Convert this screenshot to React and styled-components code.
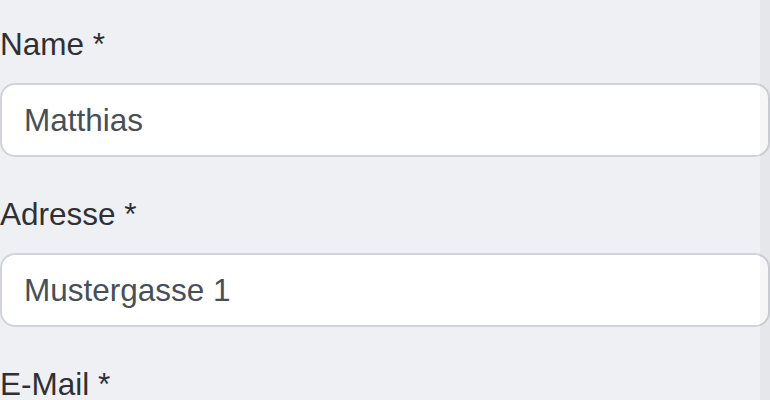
import React, { useState } from "react";
import styled, { createGlobalStyle } from "styled-components";

const GlobalStyle = createGlobalStyle`
  html, body {
    margin: 0;
    padding: 0;
    background: #eff0f4;
  }
  body {
    font-family: "Liberation Sans", Arial, Helvetica, sans-serif;
    overflow: hidden;
  }
`;

const Page = styled.div`
  position: relative;
  width: 770px;
  height: 400px;
  overflow: hidden;
`;

const Form = styled.form`
  display: flex;
  flex-direction: column;
  gap: 34px;
  padding-top: 21px;
`;

const Field = styled.div`
  display: flex;
  flex-direction: column;
`;

const Label = styled.label`
  font-size: 31.5px;
  line-height: 46px;
  color: #2f3033;
  margin-bottom: 16px;
`;

const Input = styled.input`
  box-sizing: border-box;
  width: 770px;
  height: 74px;
  margin: 0;
  padding: 0 22px;
  border: 2px solid #d0d4da;
  border-radius: 15px;
  background: #fff;
  font-family: "Liberation Sans", Arial, Helvetica, sans-serif;
  font-size: 31.5px;
  color: #484f57;
  outline: none;
`;

const ScrollTrack = styled.div`
  position: absolute;
  top: 0;
  right: 0;
  width: 10px;
  height: 100%;
  background: rgba(0, 0, 0, 0.035);
  pointer-events: none;
`;

const fields = [
  { id: "name", label: "Name *", value: "Matthias" },
  { id: "adresse", label: "Adresse *", value: "Mustergasse 1" },
  { id: "email", label: "E-Mail *", value: "" },
];

const App = () => {
  const [values, setValues] = useState(
    Object.fromEntries(fields.map((f) => [f.id, f.value]))
  );

  return (
    <Page>
      <GlobalStyle />
      <Form onSubmit={(e) => e.preventDefault()}>
        {fields.map((f) => (
          <Field key={f.id}>
            <Label htmlFor={f.id}>{f.label}</Label>
            <Input
              id={f.id}
              value={values[f.id]}
              onChange={(e) => setValues({ ...values, [f.id]: e.target.value })}
            />
          </Field>
        ))}
      </Form>
      <ScrollTrack />
    </Page>
  );
};

export default App;
